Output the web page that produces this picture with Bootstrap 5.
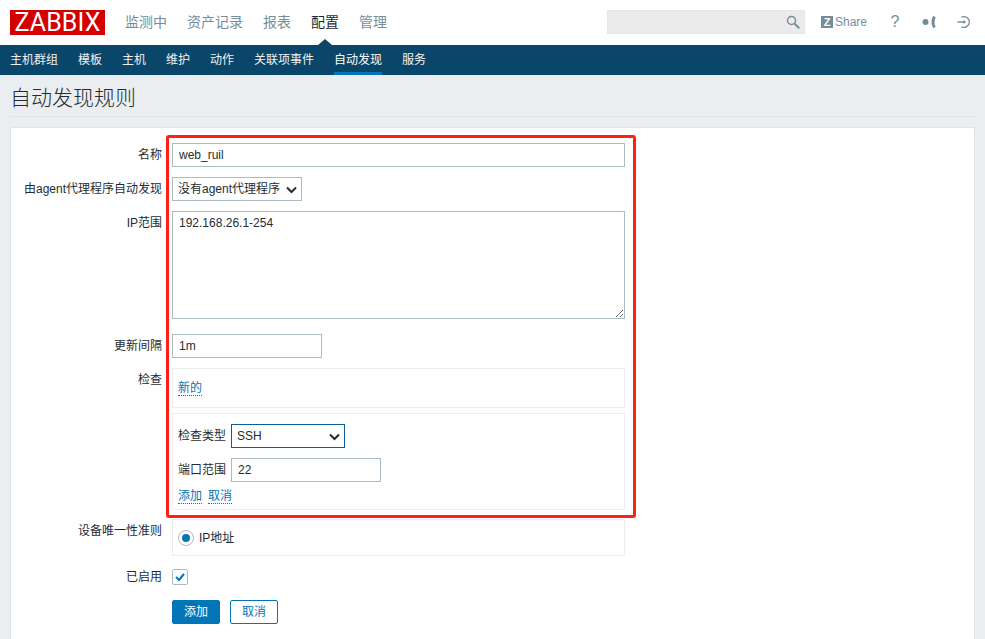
<!DOCTYPE html>
<html lang="zh">
<head>
<meta charset="utf-8">
<title>自动发现规则</title>
<link href="https://cdn.jsdelivr.net/npm/bootstrap@5.3.0/dist/css/bootstrap.min.css" rel="stylesheet">
<style>
html,body{height:100%;overflow:hidden}
body{background:#ebeef0;color:#1f2c33;font:12px/14px "Liberation Sans","Noto Sans CJK SC",sans-serif;position:relative}
.topbar{height:45px;background:#fff;padding:10px 0 0 10px}
.brand{width:95px;height:25px;background:#d40000;color:#fff;font-family:Roboto,sans-serif;font-weight:400;font-size:25px;line-height:25px;text-align:center;letter-spacing:.1px;margin-right:20px;flex:none}
.mainnav{gap:20px;font-size:14px;line-height:24px;color:#768d99}
.mainnav .on{color:#1f2c33}
.searchbox{width:198px;height:24px;background:#ebebeb;border:1px solid #e6e6e6;margin-left:220px;padding:0 4px 0 0}
.tools{color:#768d99;margin-left:16px;height:24px}
.zicon{width:12px;height:12px;background:#768d99;color:#fff;font-size:11px;line-height:12px;font-weight:700;text-align:center;margin-right:2px}
.toolq{font-size:16px;width:12px;text-align:center;margin-left:22px}
.dotmark{margin-left:21px}
.exitmark{margin-left:20px}
.subbar{height:30px;background:#0a466a;padding-left:10px;gap:20px;color:#f2f2f2;line-height:30px;position:relative}
.subbar .on{color:#fff;box-shadow:inset 0 -3px 0 #0275b8;height:30px}
.notch{position:absolute;left:318px;top:-6px;width:0;height:0;border-left:7px solid transparent;border-right:7px solid transparent;border-bottom:6px solid #0a466a}
.pagehead{margin:0 10px;height:42px;border-bottom:1px solid #dfe4e7;font-size:21px;line-height:45px;color:#1f2c33;font-weight:300}
.sheet{margin:10px 10px 0;height:520px;background:#fff;border:1px solid #dfe4e7;border-radius:2px;padding-top:15px}
.frow{display:flex;margin-bottom:10px}
.flabel{width:161px;flex:none;text-align:right;padding-top:5px;padding-right:10px;margin:0}
.ctl,.ctl:focus{height:24px;min-height:0;border:1px solid #acbbc2;border-radius:0;padding:0 6px;font-size:12px;color:#1f2c33;box-shadow:none;background-color:#fff}
select.ctl{padding-left:5px;padding-right:18px;background-position:right 3px center;background-size:13px 13px;background-image:url("data:image/svg+xml,%3Csvg xmlns='http://www.w3.org/2000/svg' viewBox='0 0 13 13'%3E%3Cpath d='M2 4.5l4.5 4.5 4.5-4.5' fill='none' stroke='%231f2c33' stroke-width='2'/%3E%3C/svg%3E")}
.w453{width:453px}.w150{width:150px}.w130{width:130px}.w114{width:114px}
.ctl.area,.ctl.area:focus{height:108px;padding:4px 6px;line-height:14px;resize:both}
.ctl.hot{border-color:#0a5f94}
.tight{margin-bottom:15px}
.panel{width:453px;border:1px solid #ebeef0;padding:5px}
.panel.newp{height:40px;padding:12px 5px;margin-bottom:5px}
.panel.formp{height:97px;padding-top:10px}
.panel.radp{height:37px}
.tlink{color:#0275b8;text-decoration:none;border-bottom:1px dotted #0275b8}
.inlabel{width:53px;flex:none}
.inrow{margin-bottom:10px}
.linkrow{margin-top:-3px;gap:6px}
.radiodot{width:16px;height:16px;border:1px solid #acbbc2;border-radius:50%;margin-right:5px;position:relative}
.radiodot::after{content:"";position:absolute;left:3px;top:3px;width:8px;height:8px;border-radius:50%;background:#0275b8}
.tick{width:16px;height:16px;border:1px solid #acbbc2;border-radius:2px;display:flex;align-items:center;justify-content:center}
.r-after{margin-bottom:9px}
.r-radio{margin-bottom:13px}
.chk .flabel{padding-top:1px}
.act{height:24px;width:48px;padding:0;font-size:12px;line-height:22px;border-radius:2px}
.act.pri{background:#0275b8;border:1px solid #0275b8;color:#fff}
.act.sec{background:#fff;border:1px solid #0275b8;color:#0275b8;margin-left:10px}
.redbox{position:absolute;left:166px;top:135px;width:470px;height:383px;border:3px solid #ff2015;border-radius:3px;pointer-events:none}
</style>
</head>
<body>
<header class="topbar d-flex align-items-start">
  <div class="brand">ZABBIX</div>
  <nav class="mainnav d-flex"><span>监测中</span><span>资产记录</span><span>报表</span><span class="on">配置</span><span>管理</span></nav>
  <div class="searchbox d-flex align-items-center justify-content-end">
    <svg width="14" height="14" viewBox="0 0 14 14" fill="none" stroke="#768d99"><circle cx="5.5" cy="5.5" r="4" stroke-width="1.5"/><path d="M8.5 8.5l4.7 4.7" stroke-width="2"/></svg>
  </div>
  <div class="tools d-flex align-items-center">
    <span class="zicon">Z</span><span>Share</span>
    <span class="toolq">?</span>
    <svg class="dotmark" width="14" height="14" viewBox="0 0 14 14" fill="none"><circle cx="3.5" cy="7" r="3" fill="#768d99"/><path d="M12.5 1.5C10.5 4.5 10.5 9.5 12.5 12.5" stroke="#768d99" stroke-width="3"/></svg>
    <svg class="exitmark" width="16" height="16" viewBox="0 0 16 16" fill="none" stroke="#768d99" stroke-width="1.3"><path d="M5.5 3.2A5.4 5.4 0 1 1 5.5 12.8"/><path d="M1.5 8h7.5M7.6 6.6L9 8 7.6 9.4"/></svg>
  </div>
</header>
<nav class="subbar d-flex"><i class="notch"></i><span>主机群组</span><span>模板</span><span>主机</span><span>维护</span><span>动作</span><span>关联项事件</span><span class="on">自动发现</span><span>服务</span></nav>
<div class="pagehead">自动发现规则</div>
<main class="sheet">
  <form>
    <div class="frow"><label class="flabel">名称</label><input class="form-control ctl w453" value="web_ruil"></div>
    <div class="frow"><label class="flabel">由agent代理程序自动发现</label><select class="form-select ctl w130"><option>没有agent代理程序</option></select></div>
    <div class="frow tight"><label class="flabel">IP范围</label><textarea class="form-control ctl area w453">192.168.26.1-254</textarea></div>
    <div class="frow"><label class="flabel">更新间隔</label><input class="form-control ctl w150" value="1m"></div>
    <div class="frow mb-0"><label class="flabel">检查</label><div class="panel newp"><a class="tlink" href="#">新的</a></div></div>
    <div class="frow r-after"><span class="flabel"></span>
      <div class="panel formp">
        <div class="d-flex align-items-center inrow"><span class="inlabel">检查类型</span><select class="form-select ctl hot w114"><option>SSH</option></select></div>
        <div class="d-flex align-items-center inrow"><span class="inlabel">端口范围</span><input class="form-control ctl w150" value="22"></div>
        <div class="d-flex linkrow"><a class="tlink" href="#">添加</a><a class="tlink" href="#">取消</a></div>
      </div>
    </div>
    <div class="frow r-radio"><label class="flabel">设备唯一性准则</label><div class="panel radp d-flex align-items-center"><i class="radiodot"></i><span>IP地址</span></div></div>
    <div class="frow tight chk"><label class="flabel">已启用</label><i class="tick"><svg width="12" height="12" viewBox="0 0 12 12" fill="none"><path d="M2 6l3 3 5-6" stroke="#0275b8" stroke-width="2"/></svg></i></div>
    <div class="frow"><span class="flabel"></span><button type="button" class="btn act pri">添加</button><button type="button" class="btn act sec">取消</button></div>
  </form>
</main>
<div class="redbox"></div>
<script src="https://cdn.jsdelivr.net/npm/bootstrap@5.3.0/dist/js/bootstrap.bundle.min.js"></script>
</body>
</html>
